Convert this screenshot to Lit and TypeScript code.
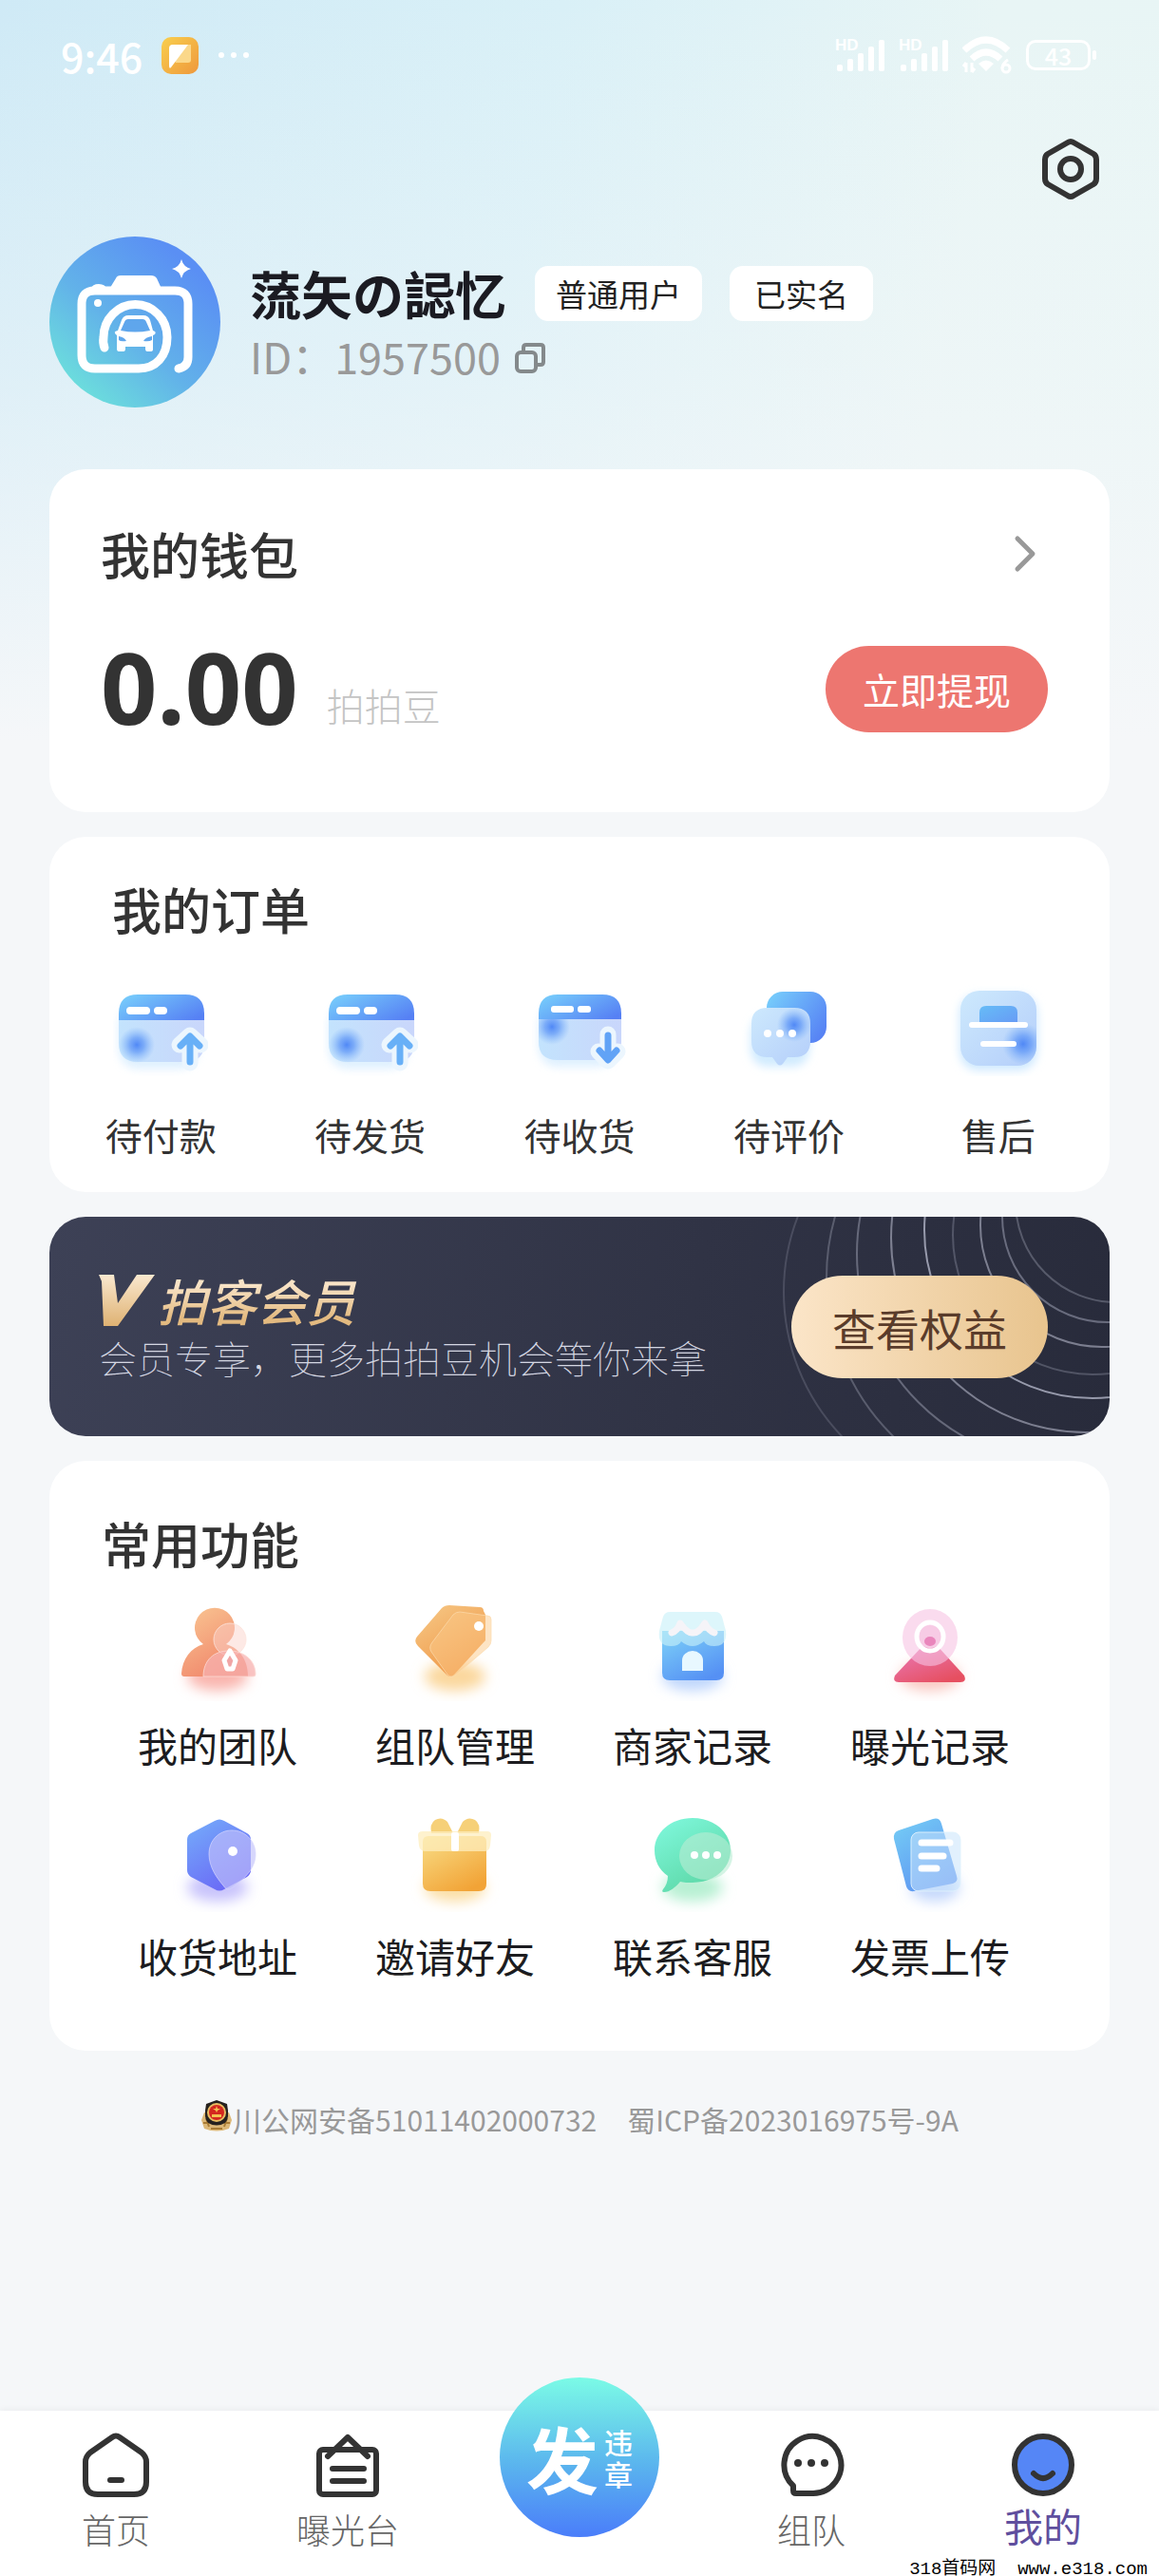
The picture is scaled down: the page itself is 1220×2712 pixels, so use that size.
import { LitElement, html, svg, css, TemplateResult, SVGTemplateResult } from "lit";
import { customElement } from "lit/decorators.js";

interface Entry {
  label: string;
  icon: SVGTemplateResult;
}

/* ---------- order icons (100 x 100) ---------- */

const orderDefs = svg`
  <defs>
    <linearGradient id="oHead" x1="0" y1="0.2" x2="1" y2="0.8">
      <stop offset="0" stop-color="#76cbfb" /><stop offset="1" stop-color="#5680f4" />
    </linearGradient>
    <linearGradient id="oBody" x1="0" y1="0" x2="1" y2="0">
      <stop offset="0" stop-color="#c3e3fd" /><stop offset="1" stop-color="#c9d6fb" />
    </linearGradient>
    <linearGradient id="oPane" x1="0" y1="0" x2="1" y2="1">
      <stop offset="0" stop-color="#cde9fd" /><stop offset="1" stop-color="#b4cefa" />
    </linearGradient>
    <linearGradient id="oArrow" x1="0" y1="0" x2="1" y2="1">
      <stop offset="0" stop-color="#66bcf7" /><stop offset="1" stop-color="#679af5" />
    </linearGradient>
    <radialGradient id="oSpot">
      <stop offset="0" stop-color="#5088f6" /><stop offset="0.4" stop-color="#639af7" stop-opacity="0.75" /><stop offset="1" stop-color="#7db2f9" stop-opacity="0" />
    </radialGradient>
    <filter id="oBlur" x="-30%" y="-30%" width="160%" height="160%"><feGaussianBlur stdDeviation="5" /></filter>
  </defs>
`;

const shippingIcon = svg`
  ${orderDefs}
  <rect x="6" y="26" width="84" height="66" rx="20" fill="#d5ecfe" filter="url(#oBlur)" opacity="0.8" />
  <path d="M6 41H96V65Q96 85 76 85H26Q6 85 6 65Z" fill="url(#oBody)" />
  <circle cx="25" cy="67" r="19" fill="url(#oSpot)" />
  <path d="M6 41V34Q6 14 26 14H76Q96 14 96 34V41Z" fill="url(#oHead)" />
  <rect x="14" y="27" width="25" height="8" rx="4" fill="#fff" />
  <rect x="43" y="27" width="14" height="8" rx="4" fill="#fff" />
  <path d="M81 86V58M70 67L81 57L92 67" fill="none" stroke="#ecf6fe" stroke-width="17" stroke-linecap="round" stroke-linejoin="round" />
  <path d="M81 85V60M71 68L81 58L91 68" fill="none" stroke="#68b0f7" stroke-width="7" stroke-linecap="round" stroke-linejoin="round" />
`;

const receivingIcon = svg`
  ${orderDefs}
  <rect x="7" y="26" width="82" height="64" rx="20" fill="#d5ecfe" filter="url(#oBlur)" opacity="0.8" />
  <path d="M7 40H94V64Q94 83 74 83H27Q7 83 7 64Z" fill="url(#oBody)" />
  <clipPath id="oClip"><path d="M7 40H94V64Q94 83 74 83H27Q7 83 7 64Z" /></clipPath>
  <circle cx="21" cy="48" r="19" fill="url(#oSpot)" clip-path="url(#oClip)" />
  <path d="M7 40V34Q7 14 27 14H74Q94 14 94 34V40Z" fill="url(#oHead)" />
  <rect x="20" y="26" width="24" height="7" rx="3" fill="#fff" />
  <rect x="48" y="26" width="14" height="7" rx="3" fill="#fff" />
  <path d="M80 56V84M70 74L80 84L90 74" fill="none" stroke="#ecf6fe" stroke-width="17" stroke-linecap="round" stroke-linejoin="round" />
  <path d="M80 57V82M71 73L80 83L89 73" fill="none" stroke="#61a3f6" stroke-width="7" stroke-linecap="round" stroke-linejoin="round" />
`;

const reviewIcon = svg`
  ${orderDefs}
  <rect x="10" y="36" width="62" height="54" rx="18" fill="#d0ebfe" filter="url(#oBlur)" />
  <rect x="27" y="11" width="63" height="54" rx="17" fill="url(#oHead)" />
  <path d="M28 28H56Q73 28 73 45V63Q73 80 56 80H49L44 87Q41 90 38 87L33 80H28Q11 80 11 63V45Q11 28 28 28Z" fill="url(#oPane)" />
  <circle cx="56" cy="46" r="18" fill="url(#oSpot)" />
  <circle cx="28" cy="55" r="4" fill="#fff" /><circle cx="41" cy="55" r="4" fill="#fff" /><circle cx="54" cy="55" r="4" fill="#fff" />
`;

const afterSaleIcon = svg`
  ${orderDefs}
  <rect x="9" y="14" width="82" height="80" rx="20" fill="#cfe9fe" filter="url(#oBlur)" />
  <rect x="10" y="10" width="80" height="79" rx="20" fill="url(#oPane)" />
  <clipPath id="oPaneClip"><rect x="10" y="10" width="80" height="79" rx="20" /></clipPath>
  <circle cx="76" cy="66" r="22" fill="url(#oSpot)" clip-path="url(#oPaneClip)" />
  <path d="M30 45V33Q30 26 37 26H63Q70 26 70 33V45Z" fill="url(#oArrow)" />
  <rect x="19" y="43" width="62" height="6" rx="3" fill="#fff" />
  <rect x="31" y="63" width="38" height="6" rx="3" fill="#fff" />
`;

/* ---------- function icons (100 x 110) ---------- */

const shade = (color: string, x = 50, y = 84, rx = 32) => svg`
  <filter id="fBlur" x="-50%" y="-150%" width="200%" height="400%"><feGaussianBlur stdDeviation="7" /></filter>
  <ellipse cx=${x} cy=${y} rx=${rx} ry="15" fill=${color} filter="url(#fBlur)" />
`;

const fill = (a: string, b: string) => svg`
  <linearGradient id="fFill" x1="0.1" y1="0" x2="0.7" y2="1">
    <stop offset="0" stop-color=${a} /><stop offset="1" stop-color=${b} />
  </linearGradient>
`;

const teamIcon = svg`
  ${fill("#f9c592", "#f08268")}${shade("#f9b5ae")}
  <path d="M35 50A21 21 0 1 1 59 50C73 54 82 67 82 84H15Q12 84 12 81C13 65 22 54 35 50Z" fill="url(#fFill)" />
  <circle cx="63" cy="45" r="17" fill="#fbd3cb" fill-opacity="0.5" stroke="#fde3dc" stroke-opacity="0.8" />
  <path d="M35 84C35 67 46 57 62 57S90 67 90 82Q90 84 87 84Z" fill="#f7b1b0" fill-opacity="0.75" stroke="#fcd9d3" stroke-opacity="0.8" />
  <path d="M63 57L69 67L66 76H60L57 67Z" fill="#f0a5a5" stroke="#fff" stroke-width="5" stroke-linejoin="round" />
`;

const tagIcon = svg`
  ${fill("#f6c886", "#ef9442")}${shade("#fbd79c")}
  <path d="M44 9L76 11Q80 11 80 15L82 19V46L49 82Q45 86 41 82L11 52Q6 47 10 42L36 12Q39 9 44 9Z" fill="url(#fFill)" />
  <path d="M55 16L84 20Q88 20 88 24V46Q88 50 85 53L50 83Q46 86 42 82L25 58Q22 53 26 48L48 19Q51 16 55 16Z" fill="#fbc98a" fill-opacity="0.5" stroke="#fcdcae" stroke-opacity="0.7" />
  <circle cx="75" cy="31" r="5" fill="#fff" />
`;

const shopIcon = svg`
  ${fill("#7cd0f8", "#5590f4")}${shade("#bdd5fc")}
  <path d="M18 36H83V80Q83 88 75 88H26Q18 88 18 80Z" fill="url(#fFill)" />
  <path d="M26 16H74Q79 16 81 21L85 36Q87 52 73 52Q64 52 62 47Q56 52 50 52T38 47Q36 52 27 52Q13 52 15 36L19 21Q21 16 26 16Z" fill="#c8f1f9" fill-opacity="0.62" />
  <path d="M28 38Q34 36 37 28Q45 39 50 38Q56 39 63 28Q67 36 73 38" fill="none" stroke="#f5f4f8" stroke-width="7" stroke-linecap="round" stroke-linejoin="round" />
  <path d="M39 78V67A11 10 0 0 1 61 67V78Z" fill="#e8f8ff" />
`;

const cameraIcon = svg`
  ${fill("#ea7ec0", "#e64f60")}${shade("#f9c6bf")}
  <path d="M44 50Q50 44 56 50L86 83Q89 90 82 90H17Q10 90 13 83Z" fill="url(#fFill)" />
  <ellipse cx="50" cy="43" rx="29" ry="30" fill="#f6c3e3" fill-opacity="0.6" />
  <circle cx="50" cy="42" r="12" fill="#f7cbe5" />
  <ellipse cx="50" cy="47" rx="6" ry="5" fill="#e986bc" />
  <ellipse cx="50" cy="42" rx="14" ry="15" fill="none" stroke="#fff" stroke-width="5" />
`;

const addressIcon = svg`
  ${fill("#74abfa", "#6a66f6")}${shade("#c8c3fc")}
  <path d="M47 14Q52 11 57 14L81 27Q85 29 85 34V66Q85 70 81 73L57 86Q52 89 47 86L22 73Q18 70 18 66V34Q18 29 22 27Z" fill="url(#fFill)" />
  <path d="M65 24C79 24 90 35 90 49C90 66 75 77 66 84Q60 89 56 82C50 75 41 63 41 49C41 35 51 24 65 24Z" fill="#c2c2fb" fill-opacity="0.65" stroke="#d6d6fd" stroke-opacity="0.7" />
  <circle cx="66" cy="46" r="5" fill="#fff" />
`;

const giftIcon = svg`
  ${fill("#f8dc84", "#f2a336")}${shade("#fbdea4")}
  <path d="M48 27L42 15Q36 9 29 13Q23 17 25 27Z M52 27L58 15Q64 9 71 13Q77 17 75 27Z" fill="#f6d078" />
  <path d="M16 36Q16 30 22 30H77Q83 30 83 36V80Q83 88 75 88H24Q16 88 16 80Z" fill="url(#fFill)" />
  <path d="M16 25H84Q88 25 88 29L87 40Q86 46 81 46H19Q13 46 12 40L11 29Q11 25 16 25Z" fill="#fdeebe" fill-opacity="0.75" />
  <rect x="46" y="26" width="8" height="20" rx="2" fill="#fff" />
`;

const serviceIcon = svg`
  ${fill("#7ff8dc", "#5bd6a4")}${shade("#b7f0d3")}
  <path d="M50 11C73 11 90 26 90 45S73 79 50 79C46 79 40 79 37 78C32 84 26 89 20 89Q17 89 19 86Q24 80 24 72C15 66 10 56 10 45C10 26 27 11 50 11Z" fill="url(#fFill)" />
  <ellipse cx="64" cy="51" rx="28" ry="25" fill="#b9ecd3" fill-opacity="0.6" />
  <circle cx="52" cy="50" r="4" fill="#fff" /><circle cx="64" cy="50" r="4" fill="#fff" /><circle cx="76" cy="50" r="4" fill="#fff" />
`;

const invoiceIcon = svg`
  ${fill("#74ccf5", "#5d93f2")}${shade("#c5d8fc", 55, 84, 26)}
  <path d="M17 24L53 12Q60 10 62 17L78 72Q80 78 74 80L33 88Q27 89 25 83L12 33Q11 26 17 24Z" fill="url(#fFill)" />
  <rect x="30" y="26" width="52" height="62" rx="8" fill="#c8e3fb" fill-opacity="0.55" stroke="#e0f2fd" stroke-opacity="0.9" />
  <path d="M41 37H71M41 51H64M41 64H57" stroke="#fff" stroke-width="7" stroke-linecap="round" />
`;

/* ---------- tab icons (70 x 68) ---------- */

const homeTab = svg`
  <g fill="none" stroke="#333" stroke-width="6" stroke-linecap="round" stroke-linejoin="round">
    <path d="M31 5Q35 2 39 5L62 21Q67 25 67 31V52Q67 65 54 65H16Q3 65 3 52V31Q3 25 8 21Z" />
    <path d="M29 50H41" />
  </g>
`;

const boardTab = svg`
  <g fill="none" stroke="#333" stroke-width="6" stroke-linecap="round" stroke-linejoin="round">
    <rect x="5" y="18" width="60" height="47" rx="4" />
    <path d="M14 25L35 5L56 25M19 38H52M19 51H52" />
  </g>
`;

const groupTab = svg`
  <path d="M37 64H19Q16 64 16 61V56A30 30 0 1 1 37 64Z" fill="none" stroke="#333" stroke-width="6" stroke-linejoin="round" />
  <circle cx="21" cy="32" r="4" fill="#333" /><circle cx="35" cy="32" r="4" fill="#333" /><circle cx="49" cy="32" r="4" fill="#333" />
`;

const mineTab = svg`
  <circle cx="35" cy="34" r="30" fill="#5586f6" stroke="#333" stroke-width="6" />
  <path d="M25 43Q35 53 45 43" fill="none" stroke="#333" stroke-width="6" stroke-linecap="round" />
`;

const ORDERS: Entry[] = [
  { label: "待付款", icon: shippingIcon },
  { label: "待发货", icon: shippingIcon },
  { label: "待收货", icon: receivingIcon },
  { label: "待评价", icon: reviewIcon },
  { label: "售后", icon: afterSaleIcon },
];

const FUNCTIONS: Entry[] = [
  { label: "我的团队", icon: teamIcon },
  { label: "组队管理", icon: tagIcon },
  { label: "商家记录", icon: shopIcon },
  { label: "曝光记录", icon: cameraIcon },
  { label: "收货地址", icon: addressIcon },
  { label: "邀请好友", icon: giftIcon },
  { label: "联系客服", icon: serviceIcon },
  { label: "发票上传", icon: invoiceIcon },
];

const base = css`
  :host {
    display: block;
  }
  * {
    box-sizing: border-box;
    margin: 0;
  }
  svg {
    display: block;
    flex: none;
  }
  a {
    color: inherit;
    text-decoration: none;
  }
  button {
    border: 0;
    padding: 0;
    background: none;
    font: inherit;
    color: inherit;
    cursor: pointer;
  }
`;

/** Each icon keeps its gradient ids inside its own shadow root. */
@customElement("app-icon")
class AppIcon extends LitElement {
  static properties = {
    art: { attribute: false },
    w: { type: Number },
    h: { type: Number },
  };
  declare art: SVGTemplateResult;
  declare w: number;
  declare h: number;

  static styles = [base];

  render() {
    return html`<svg width=${this.w} height=${this.h} viewBox="0 0 ${this.w} ${this.h}" aria-hidden="true">${this.art}</svg>`;
  }
}

@customElement("status-bar")
class StatusBar extends LitElement {
  static styles = [
    base,
    css`
      .bar {
        display: flex;
        align-items: center;
        justify-content: space-between;
        height: 116px;
        padding: 0 66px 0 64px;
        color: #fff;
      }
      .side {
        display: flex;
        align-items: center;
      }
      .left {
        gap: 20px;
      }
      .right {
        gap: 15px;
      }
      .time {
        font-size: 43px;
        font-weight: 500;
        line-height: 60px;
      }
      .battery {
        display: flex;
        align-items: center;
        gap: 2px;
      }
      .cell {
        width: 68px;
        height: 32px;
        border: 3px solid #fff;
        border-radius: 10px;
        font-size: 25px;
        font-weight: 500;
        line-height: 26px;
        text-align: center;
      }
      .cap {
        width: 4px;
        height: 10px;
        border-radius: 2px;
        background: #fff;
      }
      .hd {
        font-family: "Liberation Sans", sans-serif;
        font-size: 17px;
        font-weight: 700;
      }
    `,
  ];

  private signal(): TemplateResult {
    return html`
      <svg width="52" height="50" viewBox="0 -6 52 50" fill="#fff" aria-hidden="true">
        <text class="hd" x="0" y="14">HD</text>
        <rect x="2" y="29" width="6" height="7" rx="2" />
        <rect x="13" y="23" width="6" height="13" rx="2" />
        <rect x="24" y="17" width="6" height="19" rx="2" />
        <rect x="35" y="10" width="6" height="26" rx="2" />
        <rect x="46" y="3" width="6" height="33" rx="2" />
      </svg>
    `;
  }

  render() {
    return html`
      <div class="bar">
        <div class="side left">
          <span class="time">9:46</span>
          <svg width="39" height="39" viewBox="0 0 39 39" aria-hidden="true">
            <defs>
              <linearGradient id="app" x1="0" y1="0" x2="1" y2="1">
                <stop offset="0" stop-color="#f9cf4e" /><stop offset="1" stop-color="#ee983c" />
              </linearGradient>
            </defs>
            <rect width="39" height="39" rx="10" fill="url(#app)" />
            <path d="M8 12Q8 8 12 8H31V24Q31 27 28 27H15Z" fill="#fbd88a" />
            <path d="M8 12Q8 8 12 8H28L10 32Q8 34 8 30Z" fill="#fff" />
          </svg>
          <svg width="34" height="8" viewBox="0 0 34 8" fill="#fff" aria-hidden="true">
            <circle cx="4" cy="4" r="3" /><circle cx="17" cy="4" r="3" /><circle cx="30" cy="4" r="3" />
          </svg>
        </div>
        <div class="side right">
          ${this.signal()} ${this.signal()}
          <svg width="52" height="40" viewBox="0 0 52 40" aria-hidden="true">
            <g fill="none" stroke="#fff" stroke-width="7">
              <path d="M2 15Q25 -7 48 15" /><path d="M10 24Q25 10 40 24" />
            </g>
            <path d="M17 29Q25 22 33 29L25 37Z" fill="#fff" />
            <path d="M4 28V38M1 32L4 28M10 28V38M13 34L10 38" stroke="#fff" stroke-width="3" fill="none" />
            <path d="M48 25Q42 29 42 34" stroke="#fff" stroke-width="3" fill="none" />
            <circle cx="46" cy="34" r="4" stroke="#fff" stroke-width="3" fill="none" />
          </svg>
          <div class="battery"><span class="cell">43</span><span class="cap"></span></div>
        </div>
      </div>
    `;
  }
}

@customElement("user-header")
class UserHeader extends LitElement {
  static styles = [
    base,
    css`
      .tools {
        display: flex;
        justify-content: flex-end;
        padding: 29px 62px 0;
      }
      .tools button,
      .id button {
        display: flex;
      }
      .profile {
        display: flex;
        align-items: center;
        gap: 31px;
        padding: 38px 52px 0;
      }
      .info {
        display: flex;
        flex-direction: column;
      }
      .row {
        display: flex;
        align-items: center;
      }
      .name {
        margin-right: 30px;
        font-size: 54px;
        font-weight: 700;
        line-height: 72px;
        color: #1b1b22;
      }
      .tag {
        margin-right: 29px;
        padding: 0 22px;
        border-radius: 14px;
        background: #fff;
        font-size: 33px;
        line-height: 58px;
        color: #222;
      }
      .tag.real {
        padding: 0 26px;
      }
      .id {
        gap: 15px;
        font-size: 45px;
        line-height: 60px;
        color: #999;
      }
    `,
  ];

  render() {
    return html`
      <div class="tools">
        <button aria-label="设置">
          <svg width="62" height="66" viewBox="0 0 62 66" fill="none" stroke="#333" stroke-width="6" stroke-linejoin="round" aria-hidden="true">
            <path d="M28 5Q31 3 34 5L55 17Q58 19 58 23V43Q58 47 55 49L34 61Q31 63 28 61L7 49Q4 47 4 43V23Q4 19 7 17Z" />
            <circle cx="31" cy="33" r="11" />
          </svg>
        </button>
      </div>
      <div class="profile">
        <svg width="180" height="180" viewBox="0 0 180 180" role="img" aria-label="头像">
          <defs>
            <linearGradient id="av" x1="0.15" y1="0.9" x2="0.8" y2="0.15">
              <stop offset="0" stop-color="#6cdfdc" /><stop offset="0.45" stop-color="#62b2e9" /><stop offset="1" stop-color="#5a8ff4" />
            </linearGradient>
          </defs>
          <circle cx="90" cy="90" r="90" fill="url(#av)" />
          <path d="M136 139Q146 137 146 127V71Q146 57 132 57H48Q34 57 34 71V125Q34 139 48 139H94C112 139 124 126 124 106A33 34 0 0 0 57 106Q56 112 58 117" fill="none" stroke="#fff" stroke-width="9" stroke-linecap="round" />
          <path d="M62 57L70 44Q71 41 75 41H107Q111 41 113 44L119 57Z M44 55Q45 50 52 50T61 56Z" fill="#fff" />
          <circle cx="51" cy="70" r="4" fill="#fff" />
          <path d="M139 24Q141 32 149 34Q141 36 139 44Q137 36 129 34Q137 32 139 24Z" fill="#fff" />
          <path d="M72 99L76 88Q78 83 83 83H99Q104 83 106 88L109 99Q113 100 111 103L109 104V119Q109 121 106 121H103Q101 121 101 118V116H80V118Q80 121 78 121H73Q71 121 71 118V104Q66 100 72 99Z" fill="#fff" />
          <path d="M75 99L79 90Q80 87 83 87H98Q101 87 102 90L106 99Q90 102 75 99Z" fill="#5fa6ec" />
          <path d="M73 105Q79 106 81 110Q75 111 73 109ZM108 105Q101 106 99 110Q105 111 108 109Z" fill="#5fa6ec" />
        </svg>
        <div class="info">
          <div class="row">
            <h1 class="name">蓅矢の誋忆</h1>
            <span class="tag">普通用户</span>
            <span class="tag real">已实名</span>
          </div>
          <div class="row id">
            <span>ID：1957500</span>
            <button aria-label="复制">
              <svg width="32" height="36" viewBox="0 -4 32 36" fill="none" stroke="#84898b" stroke-width="4" aria-hidden="true">
                <rect x="2" y="10" width="20" height="20" rx="4" />
                <path d="M9 10V5Q9 2 12 2H27Q30 2 30 5V20Q30 23 27 23H22" />
              </svg>
            </button>
          </div>
        </div>
      </div>
    `;
  }
}

@customElement("tab-bar")
class TabBar extends LitElement {
  static styles = [
    base,
    css`
      .bar {
        display: grid;
        grid-template-columns: repeat(5, 1fr);
        justify-items: center;
        height: 174px;
        background: #fff;
        box-shadow: 0 -2px 6px rgba(0, 0, 0, 0.04);
      }
      .tab {
        display: flex;
        flex-direction: column;
        align-items: center;
        gap: 8px;
        padding-top: 23px;
        font-size: 36px;
        font-weight: 300;
        line-height: 50px;
        color: #666;
      }
      .tab.on {
        gap: 4px;
        font-size: 41px;
        font-weight: 400;
        color: #5f4f9e;
      }
      .post {
        display: flex;
        align-items: center;
        justify-content: center;
        gap: 6px;
        width: 168px;
        height: 168px;
        margin-top: -35px;
        border-radius: 50%;
        background: linear-gradient(#7bfbe6, #5ab4ee 55%, #4a7dfa);
        color: #fff;
        font-weight: 700;
      }
      .big {
        font-size: 76px;
        line-height: 84px;
      }
      .small {
        width: 30px;
        font-size: 30px;
        font-weight: 500;
        line-height: 34px;
      }
    `,
  ];

  render() {
    const tab = (label: string, art: SVGTemplateResult, on = false) => html`
      <a class=${on ? "tab on" : "tab"} href="#"><app-icon .art=${art} w="70" h="68"></app-icon><span>${label}</span></a>
    `;
    return html`
      <nav class="bar">
        ${tab("首页", homeTab)} ${tab("曝光台", boardTab)}
        <button class="post"><span class="big">发</span><span class="small">违章</span></button>
        ${tab("组队", groupTab)} ${tab("我的", mineTab, true)}
      </nav>
    `;
  }
}

@customElement("app-root")
class AppRoot extends LitElement {
  static styles = [
    base,
    css`
      :host {
        font-family: "Noto Sans CJK SC", "Noto Sans", sans-serif;
        color: #333;
      }
      .page {
        position: relative;
        display: flex;
        flex-direction: column;
        min-height: 100vh;
        background:
          linear-gradient(to bottom, rgba(245, 247, 249, 0), rgba(245, 247, 249, 0.4) 400px, #f5f7f9 780px),
          linear-gradient(100deg, #cfeaf6, #d9f0f7 35%, #e8f5f5 62%, #e8f6f5);
      }
      main {
        display: flex;
        flex: 1;
        flex-direction: column;
        gap: 26px;
        padding: 65px 52px 0;
      }
      .card {
        border-radius: 38px;
        background: #fff;
      }
      h2 {
        font-size: 52px;
        font-weight: 500;
        line-height: 76px;
      }
      .row {
        display: flex;
        align-items: center;
        justify-content: space-between;
      }
      .wallet {
        padding: 51px 65px 84px 54px;
      }
      .more {
        padding: 0 10px;
      }
      .balance {
        align-items: flex-start;
        margin-top: 59px;
      }
      .sum {
        display: flex;
        align-items: flex-end;
        gap: 30px;
      }
      .amount {
        font-family: "Noto Sans", "Open Sans", sans-serif;
        font-size: 104px;
        font-weight: 700;
        line-height: 86px;
      }
      .unit {
        font-size: 40px;
        font-weight: 300;
        line-height: 48px;
        color: #c4c4c4;
      }
      .cash {
        padding: 0 39px;
        border-radius: 46px;
        background: #ed7670;
        font-size: 39px;
        line-height: 91px;
        color: #fff;
      }
      .orders {
        padding: 38px 7px 33px;
      }
      .orders h2 {
        padding-left: 59px;
      }
      .five,
      .four {
        display: grid;
        justify-items: center;
      }
      .five {
        grid-template-columns: repeat(5, 1fr);
        margin-top: 38px;
      }
      .four {
        grid-template-columns: repeat(4, 1fr);
        row-gap: 38px;
        margin-top: 18px;
      }
      .entry {
        display: flex;
        flex-direction: column;
        align-items: center;
        line-height: 56px;
      }
      .five .entry {
        gap: 33px;
        font-size: 39px;
      }
      .four .entry {
        gap: 18px;
        font-size: 42px;
        color: #1c1c20;
      }
      .vip {
        position: relative;
        overflow: hidden;
        padding: 0 65px 0 52px;
        height: 231px;
        border-radius: 38px;
        background: linear-gradient(100deg, #3d4156, #303345 60%, #282b3b);
      }
      .arcs {
        position: absolute;
        top: 0;
        right: 0;
      }
      .title {
        display: flex;
        align-items: center;
        gap: 2px;
        font-size: 52px;
        font-weight: 500;
        font-style: italic;
        line-height: 64px;
      }
      .gold {
        padding-right: 10px;
        background: linear-gradient(#f8e3c6 25%, #e3ba80 80%);
        -webkit-background-clip: text;
        background-clip: text;
        color: transparent;
      }
      .sub {
        font-size: 40px;
        font-weight: 100;
        line-height: 56px;
        color: #d5d7e2;
      }
      .rights {
        position: relative;
        padding: 0 43px;
        border-radius: 54px;
        background: linear-gradient(to right, #fbe5c8, #e8c48e);
        font-size: 46px;
        line-height: 108px;
        color: #5a3c2b;
      }
      .functions {
        padding: 49px 64px 72px 52px;
      }
      .functions h2 {
        padding-left: 3px;
      }
      .record {
        display: flex;
        align-items: center;
        justify-content: center;
        margin-top: 24px;
        font-size: 30px;
        line-height: 44px;
        color: #999;
      }
      .record svg {
        margin-bottom: 8px;
      }
      .icp {
        margin-left: 32px;
      }
      .mark {
        position: absolute;
        right: 12px;
        bottom: 0;
        font-family: "Liberation Mono", "Noto Sans CJK SC", monospace;
        font-size: 19px;
        line-height: 14px;
        white-space: pre;
        color: #000;
      }
    `,
  ];

  render() {
    const entry = (e: Entry, h: number) => html`
      <a class="entry" href="#"><app-icon .art=${e.icon} w="100" h=${h}></app-icon><span>${e.label}</span></a>
    `;
    return html`
      <div class="page">
        <status-bar></status-bar>
        <user-header></user-header>
        <main>
          <section class="card wallet">
            <div class="row">
              <h2>我的钱包</h2>
              <button class="more" aria-label="查看钱包">
                <svg width="26" height="42" viewBox="0 0 26 42" fill="none" stroke="#999" stroke-width="5" stroke-linecap="round" stroke-linejoin="round" aria-hidden="true">
                  <path d="M4 5L20 21L4 37" />
                </svg>
              </button>
            </div>
            <div class="row balance">
              <div class="sum"><span class="amount">0.00</span><span class="unit">拍拍豆</span></div>
              <button class="cash">立即提现</button>
            </div>
          </section>

          <section class="card orders">
            <h2>我的订单</h2>
            <div class="five">${ORDERS.map((e) => entry(e, 100))}</div>
          </section>

          <section class="vip row">
            <svg class="arcs" width="360" height="231" viewBox="0 0 360 231" fill="none" stroke="#dfe3f5" stroke-width="2" aria-hidden="true">
              <circle cx="237" cy="79" r="220" stroke-opacity="0.16" />
              <circle cx="296" cy="64" r="234" stroke-opacity="0.25" />
              <circle cx="315" cy="39" r="221" stroke-opacity="0.32" />
              <circle cx="335" cy="22" r="205" stroke-opacity="0.45" />
              <circle cx="342" cy="14" r="177" stroke-opacity="0.6" />
              <circle cx="342" cy="19" r="147" stroke-opacity="0.22" />
              <circle cx="352" cy="9" r="128" stroke-opacity="0.45" />
              <circle cx="358" cy="0" r="111" stroke-opacity="0.35" />
              <circle cx="367" cy="-16" r="106" stroke-opacity="0.25" />
            </svg>
            <div>
              <h2 class="title">
                <svg width="60" height="54" viewBox="0 0 60 54" aria-label="V" role="img">
                  <defs>
                    <linearGradient id="v" x1="0" y1="0" x2="0" y2="1">
                      <stop offset="0" stop-color="#fae8cf" /><stop offset="1" stop-color="#dfb273" />
                    </linearGradient>
                  </defs>
                  <path d="M0 0H16L20 30L40 0H59L20 54H5L3 7Z" fill="url(#v)" />
                </svg>
                <span class="gold">拍客会员</span>
              </h2>
              <p class="sub">会员专享，更多拍拍豆机会等你来拿</p>
            </div>
            <button class="rights">查看权益</button>
          </section>

          <section class="card functions">
            <h2>常用功能</h2>
            <div class="four">${FUNCTIONS.map((e) => entry(e, 110))}</div>
          </section>

          <footer class="record">
            <svg width="34" height="34" viewBox="0 0 34 34" aria-hidden="true">
              <path d="M4 14L1 22L4 31Q17 36 30 31L33 22L30 14Z" fill="#dcb878" />
              <path d="M6 20L9 29M28 20L25 29M3 25H8M26 25H31M11 31H23" stroke="#a97c35" stroke-width="2" />
              <path d="M17 1L28 5Q31 20 26 25Q17 30 8 25Q3 20 6 5Z" fill="#26221f" />
              <circle cx="17" cy="14" r="10" fill="#e9bd62" />
              <circle cx="17" cy="14" r="8" fill="#d4271f" />
              <path d="M17 7L18 10H21L18 12L17 14L16 12L13 10H16ZM12 16H22V19H12Z" fill="#f3c14f" />
            </svg>
            <span>川公网安备51011402000732</span><span class="icp">蜀ICP备2023016975号-9A</span>
          </footer>
        </main>
        <tab-bar></tab-bar>
        <span class="mark">318首码网  www.e318.com</span>
      </div>
    `;
  }
}
